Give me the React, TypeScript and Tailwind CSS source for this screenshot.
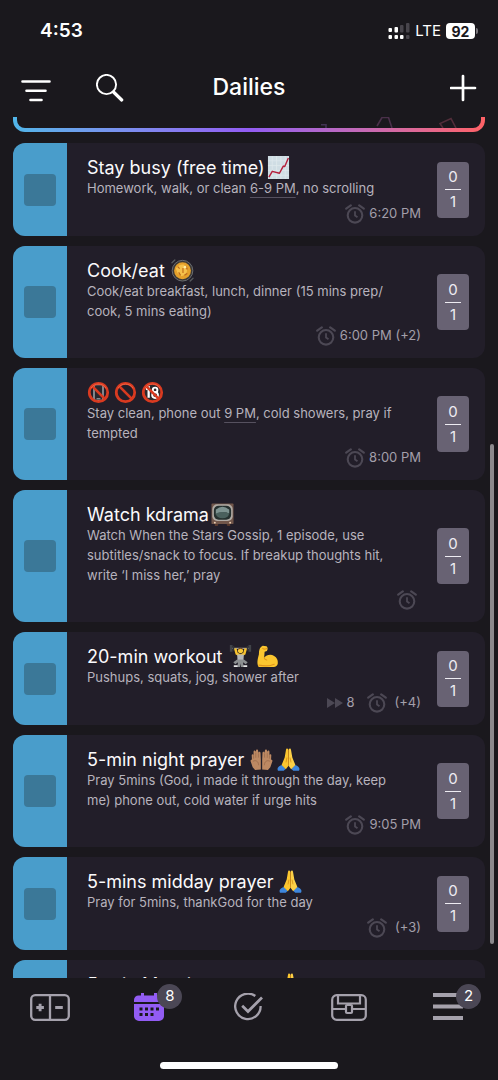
import type { ReactNode } from 'react'

type EmojiName = 'chart' | 'pan' | 'noPhone' | 'prohibited' | 'noMinors' | 'tv' | 'lifter' | 'muscle' | 'palms' | 'pray'

function Ban() {
  return (
    <>
      <circle cx="12" cy="12" r="9.6" fill="none" stroke="#d93a20" strokeWidth="2.9" />
      <path d="M5.4 5.4 18.6 18.6" stroke="#d93a20" strokeWidth="2.7" />
      <path d="M4 7.5A9.6 9.6 0 0 1 20 7.5" fill="none" stroke="#f4694a" strokeWidth="0.9" />
    </>
  )
}

const drawings: Record<EmojiName, ReactNode> = {
  chart: (
    <>
      <rect x="1" y="0" width="22" height="24" fill="#cfdde4" />
      <path d="M5.5 0v24M10 0v24M14.5 0v24M19 0v24M1 5h22M1 10h22M1 15h22M1 20h22" stroke="#dfe9ed" strokeWidth="0.8" />
      <path d="M2 22 5.5 16l7.5 2 4-7.5 1.5.5L22.3 2" fill="none" stroke="#b5203c" strokeWidth="1.5" strokeLinejoin="round" />
    </>
  ),
  pan: (
    <>
      <path d="M1 4 4 1M20 23l3-3" stroke="#55595d" strokeWidth="1.4" strokeLinecap="round" />
      <circle cx="12" cy="12.2" r="10.8" fill="#3c3936" stroke="#73777b" strokeWidth="0.9" />
      <circle cx="12" cy="12.2" r="8.8" fill="#e5a02a" />
      <path d="M5 10c3-4 6-5 9-4l-1 3 4 2-1 5-5 2-4-3z" fill="#f6c14b" />
      <path d="M7 8l2 2M8 14l2 3M16 8l1 3M14 17l3-2" fill="none" stroke="#bf6b1e" strokeWidth="1.3" />
      <path d="M12.500 9.500v5" stroke="#c9771f" strokeWidth="1.4" />
      <circle cx="14.5" cy="8.5" r="1.4" fill="#fff0a5" />
    </>
  ),
  noPhone: (
    <>
      <rect x="7.3" y="3.8" width="9.4" height="16.4" rx="1.5" fill="#29262c" stroke="#a9adb1" strokeWidth="1.5" />
      <path d="M10 18.5h4" stroke="#a9adb1" />
      <Ban />
    </>
  ),
  prohibited: <Ban />,
  noMinors: (
    <>
      <circle cx="12" cy="12" r="9" fill="#2b292c" />
      <path d="M5 8.5 8 7v10.5" fill="none" stroke="#fff" strokeWidth="2.4" />
      <circle cx="14.7" cy="9.3" r="2.4" fill="none" stroke="#fff" strokeWidth="2" />
      <circle cx="14.7" cy="14.7" r="3" fill="none" stroke="#fff" strokeWidth="2" />
      <Ban />
    </>
  ),
  tv: (
    <>
      <path d="M4 21h4l-1 3H4zM16 21h4v3h-3z" fill="#56382d" />
      <rect x="0.5" y="0.5" width="23" height="21.5" rx="1" fill="#71564a" />
      <rect x="1.4" y="1.4" width="21.2" height="17.4" rx="5" fill="#b0aaa4" />
      <rect x="3" y="2.8" width="18" height="14.6" rx="5" fill="#25302f" />
      <path d="M5 7q7-6 14 0v4q-7-3-14 1z" fill="#7d9290" />
      <path d="M5 11q7-3 14 0-1 5-7 5t-7-5" fill="#4a605d" />
      <circle cx="4" cy="20.5" r="1" fill="#efd1b3" />
      <circle cx="20" cy="20.5" r="1" fill="#efd1b3" />
    </>
  ),
  lifter: (
    <>
      <path d="M2 3.5h20" stroke="#98999b" strokeWidth="1.1" />
      <path d="M2.3 0v7M21.7 0v7" stroke="#414348" strokeWidth="2.8" />
      <path d="M4.7 1v5M19.3 1v5" stroke="#303238" strokeWidth="1.6" />
      <path d="M6.5 3.5 8 9l4 2 4-2 1.5-5.5" fill="none" stroke="#f6c12e" strokeWidth="2.6" strokeLinejoin="round" />
      <circle cx="12" cy="5.8" r="2.7" fill="#f9c936" />
      <path d="M9.3 5C9 2 15 2 14.7 5L12 4z" fill="#6e4828" />
      <path d="M8.5 10h7l-.5 7H9z" fill="#b4b6b8" />
      <path d="M8.5 15h7l4 3-2 2-3-2 1 5h-3L12 19l-.5 4h-3l1-5-3 2-2-2z" fill="#8c8f91" />
      <path d="M5 22h4M15 22h4" stroke="#e9e9e9" strokeWidth="2" />
    </>
  ),
  muscle: (
    <>
      <path d="M3 10C3 5 4 2 7 .8l4 .4c1.5 1 1.4 3.5.4 5L9 7l-.5 6.4c2-3.1 7-4 10-2.2 3.5 1.8 4.700 5.200 4.200 8.400-.3 2.100-2 3.200-4.200 3.400L2.800 23C.6 19.400 1.600 15 3 10z" fill="#fbc62f" />
      <path d="M7 3.500c1.300 1.200 2.600 1 4 .2M8.600 13.500c.4 1.200 1.500 2 2.600 2.200M3 21c5 1 12 1 16-1" fill="none" stroke="#de951c" strokeWidth="1.1" strokeLinecap="round" />
    </>
  ),
  palms: (
    <>
      <path d="M11.3 22.5V12L11 5.2c-.1-1.8-2-1.8-2.100 0L8.500 3c-.2-2-2.200-1.900-2.300 0l-.3.8c-.5-1.800-2.200-1.400-2.200.3v3.100c-.8-1.100-2.200-.5-1.900.8L2 12c-.9.1-1.700.8-1.300 2l2.100 6 2.500 3z" fill="#bd8963" />
      <path d="M12.7 22.5V12l.3-6.800c.1-1.800 2-1.800 2.100 0l.4-2.200c.2-2 2.200-1.900 2.300 0l.3.8c.5-1.800 2.200-1.400 2.200.3v3.100c.8-1.100 2.200-.5 1.900.8L22 12c.9.1 1.700.8 1.300 2l-2.100 6-2.500 3z" fill="#bd8963" />
      <path d="M8.800 5.500V10M6 4.800v5.400M3.700 7.500v3.600M15.200 5.500V10M18 4.800v5.400M20.300 7.500v3.600M3 14c3-2 6 0 6 4M21 14c-3-2-6 0-6 4" fill="none" stroke="#96674a" strokeWidth="0.7" />
    </>
  ),
  pray: (
    <>
      <path d="M0.500 22c0-2 2.400-3.800 5-4.200L9 22l-2 1.700H1zM23.500 22c0-2-2.400-3.800-5-4.200L15 22l2 1.700h6z" fill="#3e86dc" />
      <path d="M11.700 1.200C10.900-.2 9.600.4 9.400 1.800L8 10l-3.200 7.800 4.400 4.400 2.800-3.700z" fill="#fbc62f" />
      <path d="M12.300 1.200c.8-1.400 2.100-.8 2.300.6L16 10l3.200 7.800-4.400 4.400-2.800-3.700z" fill="#fcd047" />
      <path d="M12 2v16.500M9.400 15l1-5M14.600 15l-1-5" fill="none" stroke="#d48b15" strokeWidth="0.8" />
    </>
  ),
}

function Emoji({ name }: { name: EmojiName }) {
  return (
    <svg viewBox="0 0 24 24" role="img" aria-label={name} className="size-[23px] shrink-0">
      {drawings[name]}
    </svg>
  )
}

function Alarm() {
  return (
    <svg viewBox="0 0 20 20" fill="none" stroke="currentColor" aria-hidden="true" className="size-5 text-[#4c4854]">
      <circle cx="10" cy="11.3" r="7.3" strokeWidth="2.1" />
      <path d="M10 7.2v4.3l2.5 1.8" strokeWidth="1.8" />
      <path d="M1.2 4.7 5.8 1.4M18.8 4.7 14.2 1.4" strokeWidth="2.2" strokeLinecap="round" />
    </svg>
  )
}

function Due({ children }: { children: ReactNode }) {
  return <span className="underline decoration-[#56515f] decoration-1 underline-offset-4">{children}</span>
}

interface Daily {
  title: string
  spaced?: boolean
  emojis: EmojiName[]
  emojiGap?: boolean
  notes: ReactNode
  reminder: string
  streak?: number
}

const dailies: Daily[] = [
  {
    title: 'Stay busy (free time)',
    emojis: ['chart'],
    notes: <>Homework, walk, or clean <Due>6-9 PM</Due>, no scrolling</>,
    reminder: '6:20 PM',
  },
  {
    title: 'Cook/eat',
    spaced: true,
    emojis: ['pan'],
    notes: <>Cook/eat breakfast, lunch, dinner (15 mins prep/<br />cook, 5 mins eating)</>,
    reminder: '6:00 PM (+2)',
  },
  {
    title: '',
    emojis: ['noPhone', 'prohibited', 'noMinors'],
    emojiGap: true,
    notes: <>Stay clean, phone out <Due>9 PM</Due>, cold showers, pray if<br />tempted</>,
    reminder: '8:00 PM',
  },
  {
    title: 'Watch kdrama',
    emojis: ['tv'],
    notes: <>Watch When the Stars Gossip, 1 episode, use<br />subtitles/snack to focus. If breakup thoughts hit,<br />write ‘I miss her,’ pray</>,
    reminder: '',
  },
  {
    title: '20-min workout',
    spaced: true,
    emojis: ['lifter', 'muscle'],
    emojiGap: true,
    notes: 'Pushups, squats, jog, shower after',
    reminder: '(+4)',
    streak: 8,
  },
  {
    title: '5-min night prayer',
    spaced: true,
    emojis: ['palms', 'pray'],
    emojiGap: true,
    notes: <>Pray 5mins (God, i made it through the day, keep<br />me) phone out, cold water if urge hits</>,
    reminder: '9:05 PM',
  },
  {
    title: '5-mins midday prayer',
    spaced: true,
    emojis: ['pray'],
    notes: 'Pray for 5mins, thankGod for the day',
    reminder: '(+3)',
  },
  {
    title: '5-min Morning prayer',
    spaced: true,
    emojis: ['pray'],
    notes: 'Pray for 5mins',
    reminder: '',
  },
]

function DailyCard({ daily }: { daily: Daily }) {
  return (
    <li className="flex min-h-[93px] shrink-0 overflow-hidden rounded-xl bg-[#221e29]">
      <div className="flex w-[54px] shrink-0 items-center justify-center bg-[#499dcb]">
        <input
          type="checkbox"
          aria-label={daily.title || 'Stay clean'}
          className="size-8 appearance-none rounded bg-[#3b7898]"
        />
      </div>
      <div className="flex min-w-0 flex-1 flex-col pt-[14px] pb-3 pl-5">
        <h2 className={`flex h-[21px] items-center whitespace-nowrap text-[18px] text-[#fbfafc] ${daily.spaced ? 'gap-[6px]' : 'gap-[2px]'}`}>
          {daily.title}
          <span className={`flex ${daily.emojiGap ? 'gap-1' : ''}`}>
            {daily.emojis.map((name) => <Emoji key={name} name={name} />)}
          </span>
        </h2>
        <p className="whitespace-nowrap text-[13px] leading-5 text-[#b7b3bd]">{daily.notes}</p>
        <div className="mt-auto flex h-[25px] items-center justify-end pt-[5px] text-[13px] text-[#a39faa]">
          {daily.streak && (
            <span className="mr-3 flex items-center gap-[3px]">
              <svg viewBox="0 0 16 12" fill="currentColor" aria-hidden="true" className="h-3 w-4 text-[#4c4854]">
                <path d="M0 1 8 6 0 11zM8 1l8 5-8 5z" />
              </svg>
              {daily.streak}
            </span>
          )}
          <Alarm />
          <span className={daily.reminder.startsWith('(') ? 'ml-2' : 'ml-1'}>{daily.reminder}</span>
        </div>
      </div>
      <button type="button" aria-label="Checklist, 0 of 1" className="mr-4 ml-4 flex h-14 w-8 shrink-0 flex-col items-center justify-center self-center rounded bg-[#686273] text-[15px] leading-6 text-[#eeecf2]">
        <span>0</span>
        <span className="h-px w-4 bg-[#eeecf2]" />
        <span>1</span>
      </button>
    </li>
  )
}

function Badge({ children }: { children: ReactNode }) {
  return (
    <span className="absolute -top-[9px] left-1/2 ml-2 flex size-[25px] items-center justify-center rounded-full bg-[#4b4755] text-[15px] text-white">
      {children}
    </span>
  )
}

function Tab({ label, active, badge, children }: { label: string; active?: boolean; badge?: number; children: ReactNode }) {
  return (
    <a href={`#${label.toLowerCase()}`} aria-label={label} className={`relative flex h-7 flex-1 items-center justify-center ${active ? 'text-[#925cf3]' : 'text-[#a5a1ac]'}`}>
      {children}
      {badge && <Badge>{badge}</Badge>}
    </a>
  )
}

function StatusBar() {
  return (
    <div className="flex h-[62px] shrink-0 items-center justify-between pr-5 pl-10 text-white">
      <span className="text-[19px] font-semibold">4:53</span>
      <div className="flex items-center gap-[5px]">
        <svg viewBox="0 0 22 16" aria-label="Signal" role="img" className="h-4 w-[22px]">
          <g fill="#fff">
            <rect x="0.5" y="5" width="3.5" height="4" rx="1" />
            <rect x="6.5" y="4" width="3.5" height="5.5" rx="1" />
            <rect x="0.5" y="12" width="3.5" height="4" rx="1" />
            <rect x="6.5" y="12" width="3.5" height="4" rx="1" />
            <rect x="12" y="12" width="3.5" height="4" rx="1" />
          </g>
          <g fill="#48454c">
            <rect x="12" y="2" width="3.5" height="7.5" rx="1" />
            <rect x="18" y="0" width="3.5" height="9.5" rx="1" />
            <rect x="18" y="12" width="3.5" height="4" rx="1" />
          </g>
        </svg>
        <span className="text-[15px]">LTE</span>
        <span className="flex items-center gap-px">
          <span className="flex h-4 w-[29px] items-center justify-center rounded bg-white text-[14px] font-bold text-[#1a181d]">92</span>
          <span className="h-[6px] w-[2px] rounded-r bg-[#77747a]" />
        </span>
      </div>
    </div>
  )
}

export default function App() {
  return (
    <div className="flex h-screen flex-col overflow-hidden bg-[#1a181d] font-['Inter','Liberation_Sans',sans-serif]">
      <StatusBar />
      <header className="grid h-[55px] shrink-0 grid-cols-3 items-center px-5 pb-1 text-white">
        <div className="flex items-center gap-11">
          <button type="button" aria-label="Filter">
            <svg viewBox="0 0 32 28" fill="none" stroke="currentColor" strokeWidth="2.6" strokeLinecap="round" className="h-7 w-8">
              <path d="M2.5 7.500h27M6.500 16.700h19M10.500 26h11" />
            </svg>
          </button>
          <button type="button" aria-label="Search">
            <svg viewBox="0 0 28 28" fill="none" stroke="currentColor" className="size-7">
              <circle cx="10.5" cy="10.5" r="9.600" strokeWidth="1.9" />
              <path d="m17.500 18 8.200 8" strokeWidth="3.200" strokeLinecap="round" />
            </svg>
          </button>
        </div>
        <h1 className="text-center text-[23px] font-medium">Dailies</h1>
        <button type="button" aria-label="Add daily" className="justify-self-end">
          <svg viewBox="0 0 28 28" fill="none" stroke="currentColor" strokeWidth="2.700" strokeLinecap="round" className="size-7">
            <path d="M13 2v24M1 14h24" />
          </svg>
        </button>
      </header>

      <main className="relative flex min-h-0 flex-1 flex-col overflow-hidden px-[13px]">
        <div className="mb-[11px] h-[15px] shrink-0 rounded-b-xl bg-linear-to-r from-[#50b5e9] via-[#925cf3] to-[#ff6165] px-1 pb-1">
          <div className="flex h-full justify-end overflow-hidden rounded-b-lg bg-[#1a181d] pr-[22px]">
            <svg viewBox="0 0 150 11" fill="none" strokeWidth="1.600" aria-hidden="true" className="h-[11px] w-[150px]">
              <path d="M12 7.800h5V11" stroke="#413253" />
              <path d="M68 9l5-8.500h6.500L83 11" stroke="#4a304a" />
              <path d="M134 11l-3-4.500 11-5 5 9.500" stroke="#522d3a" />
            </svg>
          </div>
        </div>
        <ul className="flex flex-col gap-[10px]">
          {dailies.map((daily) => <DailyCard key={daily.title} daily={daily} />)}
        </ul>
        <div className="absolute top-[38%] right-1 h-[58%] w-1 rounded-full bg-[#8b898d]" />
      </main>

      <nav className="flex h-[102px] shrink-0 flex-col items-center justify-between pt-[15px] pb-[11px]">
        <div className="flex w-full">
          <Tab label="Habits">
            <svg viewBox="0 0 40 27" fill="none" stroke="currentColor" strokeWidth="2.300" className="h-[27px] w-10">
              <rect x="1.200" y="1.200" width="37.600" height="24.600" rx="4" />
              <path d="M20 1v25" />
              <path d="M6.300 13.500h7.600M10.100 9.700v7.600M25.200 13.500h7.600" strokeWidth="2.900" />
            </svg>
          </Tab>
          <Tab label="Dailies" active badge={8}>
            <svg viewBox="0 0 30 28" fill="currentColor" className="h-7 w-[30px]">
              <path d="M4.500 2.500H7V0h3v2.500h10V0h3v2.500h2.500A4.500 4.500 0 0 1 30 7v2H0V7a4.500 4.500 0 0 1 4.500-4.500z" />
              <path fillRule="evenodd" d="M0 11h30v12a5 5 0 0 1-5 5H5a5 5 0 0 1-5-5zM5.500 14.500v3h3v-3zM11 14.500v3h3v-3zM16.500 14.500v3h3v-3zM22 14.500v3h3v-3zM5.500 20v3h3v-3zM11 20v3h3v-3zM16.500 20v3h3v-3z" />
            </svg>
          </Tab>
          <Tab label="Todos">
            <svg viewBox="0 0 30 28" fill="none" stroke="currentColor" strokeWidth="2.300" className="h-7 w-[30px]">
              <path d="M21.300 3A12.700 12.700 0 1 0 26.600 13" />
              <path d="m8.200 12.800 5.800 5.700L28 4.500" strokeWidth="2.700" />
            </svg>
          </Tab>
          <Tab label="Rewards">
            <svg viewBox="0 0 36 27" fill="none" stroke="currentColor" strokeWidth="2.200" className="h-[27px] w-9">
              <rect x="1.200" y="1.200" width="33.600" height="24.600" rx="4.500" />
              <path d="M7 1v8.500h22V1M1 15h13M22 15h13" />
              <rect x="15" y="11" width="6" height="8" rx="1" />
            </svg>
          </Tab>
          <Tab label="Menu" badge={2}>
            <svg viewBox="0 0 30 28" fill="currentColor" className="h-7 w-[30px]">
              <path d="M0 0h30v4H0zM0 11.500h30v4H0zM0 23h30v4H0z" />
            </svg>
          </Tab>
        </div>
        <div className="h-[7px] w-[178px] rounded-full bg-white" />
      </nav>
    </div>
  )
}
